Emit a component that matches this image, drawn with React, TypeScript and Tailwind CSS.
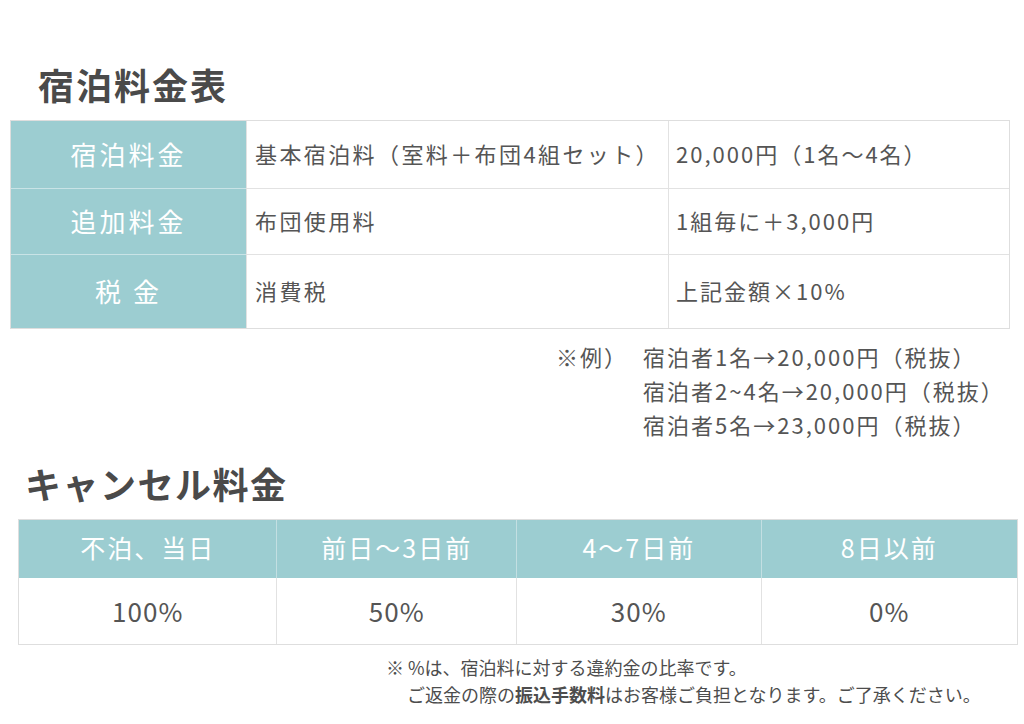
import React from "react";

const font = { fontFamily: '"Noto Sans CJK JP", "Noto Sans", sans-serif' };

export default function App() {
  const rows = [
    { h: "宿泊料金", a: "基本宿泊料（室料＋布団4組セット）", b: "20,000円（1名〜4名）", cls: "h-[67px]" },
    { h: "追加料金", a: "布団使用料", b: "1組毎に＋3,000円", cls: "h-[66px]" },
    { h: "税 金", a: "消費税", b: "上記金額×10%", cls: "h-[74px]" },
  ];
  const cancelHead = ["不泊、当日", "前日〜3日前", "4〜7日前", "8日以前"];
  const cancelBody = ["100%", "50%", "30%", "0%"];
  const widths = ["w-[258px]", "w-[240px]", "w-[245px]", "w-[257px]"];
  return (
    <div className="w-[1024px] h-[724px] bg-white text-[#555] overflow-hidden" style={font}>
      <div className="pt-[63px] pl-[38px] text-[36px] leading-[42px] font-bold text-[#4a4a4a] tracking-[2px]">
        宿泊料金表
      </div>
      <div className="mt-[15px] ml-[10px] w-[1000px] border border-[#dedede] flex flex-col">
        {rows.map((r, i) => (
          <div key={i} className={`flex ${r.cls} ${i > 0 ? "border-t border-[#e2e2e2]" : ""}`}>
            <div
              className={`w-[235px] bg-[#9ccdd1] text-white flex items-center justify-center text-[26px] tracking-[3px] pb-[3px] ${
                i > 0 ? "-mt-px border-t border-[#c9e3e6]" : ""
              }`}
            >
              {r.h}
            </div>
            <div className="w-[422px] flex items-center pl-[8px] pb-[2px] text-[22px] tracking-[2.4px] border-l border-[#e2e2e2]">
              {r.a}
            </div>
            <div className="flex-1 flex items-center pl-[7px] pb-[2px] text-[22px] tracking-[2px] border-l border-[#e2e2e2]">
              {r.b}
            </div>
          </div>
        ))}
      </div>
      <div className="mt-[10px] ml-[556px] flex text-[22px] leading-[34px] tracking-[2px]">
        <div className="w-[87px]">※例）</div>
        <div className="flex flex-col">
          <div>宿泊者1名→20,000円（税抜）</div>
          <div>宿泊者2~4名→20,000円（税抜）</div>
          <div>宿泊者5名→23,000円（税抜）</div>
        </div>
      </div>
      <div className="mt-[21px] pl-[25px] text-[36px] leading-[42px] font-bold text-[#4a4a4a] tracking-[1.5px]">
        キャンセル料金
      </div>
      <div className="mt-[15px] ml-[18px] w-[1000px] border border-[#dedede]">
        <div className="flex h-[58px] bg-[#9ccdd1] text-white text-[25px] tracking-[2px]">
          {cancelHead.map((t, i) => (
            <div
              key={i}
              className={`${widths[i]} flex items-center justify-center pb-[2px] ${i > 0 ? "border-l border-[#c3dfe2]" : ""}`}
            >
              {t}
            </div>
          ))}
        </div>
        <div className="flex h-[66px] text-[26px] tracking-[1px]">
          {cancelBody.map((t, i) => (
            <div
              key={i}
              className={`${widths[i]} flex items-center justify-center pb-[2px] ${i > 0 ? "border-l border-[#e2e2e2]" : ""}`}
            >
              {t}
            </div>
          ))}
        </div>
      </div>
      <div className="mt-[9px] text-[18px] leading-[27px] text-[#4d4d4d]">
        <div className="pl-[386px]">※ %は、宿泊料に対する違約金の比率です。</div>
        <div className="pl-[407px]">
          ご返金の際の<span className="font-bold">振込手数料</span>はお客様ご負担となります。ご了承ください。
        </div>
      </div>
    </div>
  );
}
